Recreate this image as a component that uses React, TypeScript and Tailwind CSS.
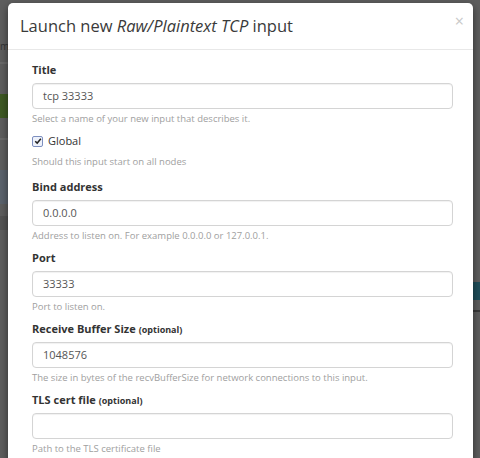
import React from 'react';

const font = { fontFamily: '"Open Sans", "Noto Sans", sans-serif' };

interface FieldProps {
  label: string;
  optional?: boolean;
  value: string;
  help: string;
}

const Field: React.FC<FieldProps> = ({ label, optional, value, help }) => (
  <div className="mb-[5px]">
    <label className="block h-[18px] text-[11px] leading-[18px] font-bold text-[#333]">
      {label}
      {optional && <span className="ml-[3px] text-[9px] font-bold">(optional)</span>}
    </label>
    <div className="mt-[4px] h-[26px] rounded-[4px] border border-[#d4d4d4] px-[10px] text-[11px] leading-[24px] text-[#555] shadow-[inset_0_1px_1px_rgba(0,0,0,0.06)]">
      {value}
    </div>
    <p className="mt-[2px] h-[16px] text-[9.5px] leading-[16px] text-[#a0a0a0]">{help}</p>
  </div>
);

export default function App() {
  return (
    <div className="relative h-[458px] w-[480px] overflow-hidden bg-[#5e5e5e]" style={font}>
      {/* dimmed page behind the modal */}
      <div className="flex h-full justify-between">
        <div className="flex w-[8px] flex-col">
          <div className="h-[40px]" />
          <div className="h-[12px] text-[10px] leading-[12px] text-[#333]">m)</div>
          <div className="mt-[10px] h-[2px] bg-[#6a6a6a]" />
          <div className="mt-[30px] h-[24px] bg-[#3f5a24]" />
          <div className="mt-[20px] h-[2px] bg-[#6b6b6b]" />
          <div className="mt-[30px] h-[34px] bg-[#5b636d]" />
          <div className="mt-[12px] h-[14px] bg-[#545454]" />
        </div>
        <div className="flex w-[7px] flex-col">
          <div className="h-[282px]" />
          <div className="h-[18px] bg-[#1f4e5a]" />
          <div className="mt-[10px] h-[2px] bg-[#3a3a3a]" />
        </div>
      </div>

      {/* modal */}
      <div className="absolute left-[8px] top-[3px] h-[470px] w-[465px] rounded-t-[5px] bg-white shadow-[0_3px_9px_rgba(0,0,0,0.5)]">
        <div className="flex h-[47px] items-center justify-between border-b border-[#e8e8e8] pl-[12px] pr-[9px]">
          <h4 className="text-[16.5px] leading-[24px] text-[#3a3a3a]">
            Launch new <em>Raw/Plaintext TCP</em> input
          </h4>
          <span className="-mt-[10px] text-[16px] leading-none text-[#c8c8c8]">×</span>
        </div>

        <div className="pl-[24px] pr-[20px] pt-[11px]">
          <Field label="Title" value="tcp 33333" help="Select a name of your new input that describes it." />

          <div className="flex h-[18px] items-center gap-[5px]">
            <span className="flex h-[11px] w-[11px] items-center justify-center rounded-[2px] border border-[#7d8fbf] bg-[#eef2fb]">
              <svg viewBox="0 0 10 10" className="h-[8px] w-[8px]">
                <path d="M1.5 5.2 L4 7.6 L8.6 2.2" fill="none" stroke="#222" strokeWidth="1.8" />
              </svg>
            </span>
            <span className="text-[11px] text-[#333]">Global</span>
          </div>
          <p className="mt-[4px] mb-[8px] h-[16px] text-[9.5px] leading-[16px] text-[#a0a0a0]">
            Should this input start on all nodes
          </p>

          <Field label="Bind address" value="0.0.0.0" help="Address to listen on. For example 0.0.0.0 or 127.0.0.1." />
          <Field label="Port" value="33333" help="Port to listen on." />
          <Field
            label="Receive Buffer Size"
            optional
            value="1048576"
            help="The size in bytes of the recvBufferSize for network connections to this input."
          />
          <Field label="TLS cert file" optional value="" help="Path to the TLS certificate file" />
        </div>
      </div>
    </div>
  );
}
